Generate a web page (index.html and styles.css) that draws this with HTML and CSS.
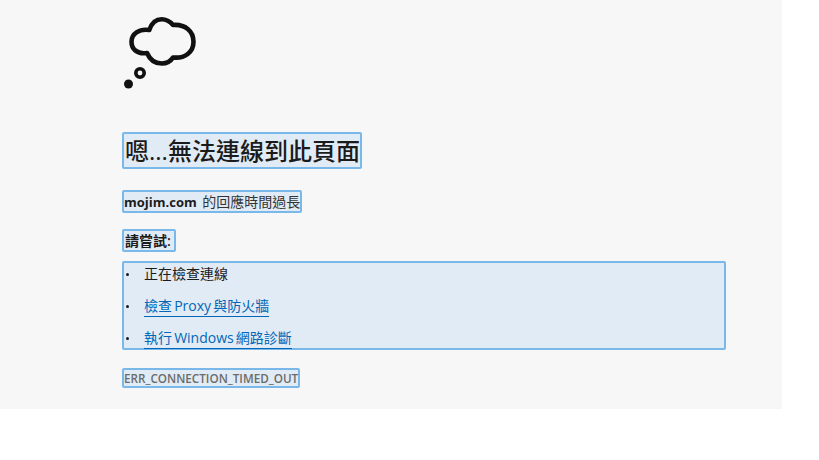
FILE: index.html
```html
<!DOCTYPE html>
<html lang="zh-Hant">
<head>
    <meta charset="UTF-8">
    <meta name="viewport" content="width=device-width, initial-scale=1.0">
    <title>無法連線到此頁面</title>
    <link rel="stylesheet" href="styles.css">
</head>
<body>
    <div class="page">
        <svg class="cloud" viewBox="12 0 80 100" width="80" height="100" aria-hidden="true">
            <path d="M39.3 30C41.5 23.5 46 19.3 51.7 19.3C56 19.3 60 21.5 63 25C75 24 83.5 31 83.5 41.7C83.5 52 75 58.8 63 57.5C60.5 61.5 56 63.5 51.7 63.5C45.5 63.5 40 60 37 53C27 54.5 21.5 49 21.5 41.7C21.5 34 29 28.5 39.3 30Z" fill="none" stroke="#111" stroke-width="4.6" stroke-linejoin="round"/>
            <circle cx="30" cy="73" r="4.2" fill="none" stroke="#111" stroke-width="3.6"/>
            <circle cx="18.5" cy="84" r="4.5" fill="#111"/>
        </svg>

        <h1 class="sel title">嗯...無法連線到此頁面</h1>
        <p class="sel host"><strong>mojim.com</strong> 的回應時間過長</p>
        <p class="sel try">請嘗試:</p>

        <ul class="sel tips">
            <li>正在檢查連線</li>
            <li><a href="#">檢查 Proxy 與防火牆</a></li>
            <li><a href="#">執行 Windows 網路診斷</a></li>
        </ul>

        <p class="sel code">ERR_CONNECTION_TIMED_OUT</p>
    </div>
</body>
</html>
```

FILE: styles.css
```css
body {
    margin: 0;
    background-color: #fff;
    font-family: "Open Sans", "Noto Sans CJK TC", sans-serif;
    color: #1b1b1b;
}
.page {
    box-sizing: border-box;
    display: flex;
    flex-direction: column;
    align-items: flex-start;
    width: 782px;
    height: 409px;
    padding-left: 122px;
    background-color: #f7f7f7;
}
.cloud {
    display: block;
    margin-bottom: 32px;
}
.sel {
    box-sizing: border-box;
    margin: 0;
    border: 2px solid #7ab8ea;
    border-radius: 2px;
    background-color: #e1ebf5;
}
.title {
    height: 37px;
    padding: 0 0 0 1px;
    font-size: 24px;
    line-height: 33px;
    font-weight: 500;
}
.host {
    height: 23px;
    margin-top: 21px;
    font-size: 14px;
    line-height: 19px;
    word-spacing: 2px;
    color: #333;
}
.host strong {
    font-size: 13px;
    font-weight: 700;
    color: #1b1b1b;
}
.try {
    height: 23px;
    margin-top: 16px;
    padding: 0 3px 0 1px;
    font-size: 14px;
    line-height: 19px;
    font-weight: 600;
}
.tips {
    width: 604px;
    height: 89px;
    margin-top: 9px;
    padding: 1px 0 0 20px;
    list-style: none;
    font-size: 14px;
    line-height: 19px;
}
.tips li {
    position: relative;
    height: 32px;
}
.tips li::before {
    content: "";
    position: absolute;
    left: -18px;
    top: 9px;
    width: 3px;
    height: 3px;
    border-radius: 50%;
    background-color: #1b1b1b;
}
.tips a {
    color: #0067b8;
    text-decoration: none;
    word-spacing: -1.5px;
    border-bottom: 1px solid #0067b8;
    padding-bottom: 1px;
}
.code {
    height: 20px;
    margin-top: 18px;
    font-size: 11.7px;
    line-height: 17px;
    font-weight: 600;
    color: #6b6b6b;
}
```
